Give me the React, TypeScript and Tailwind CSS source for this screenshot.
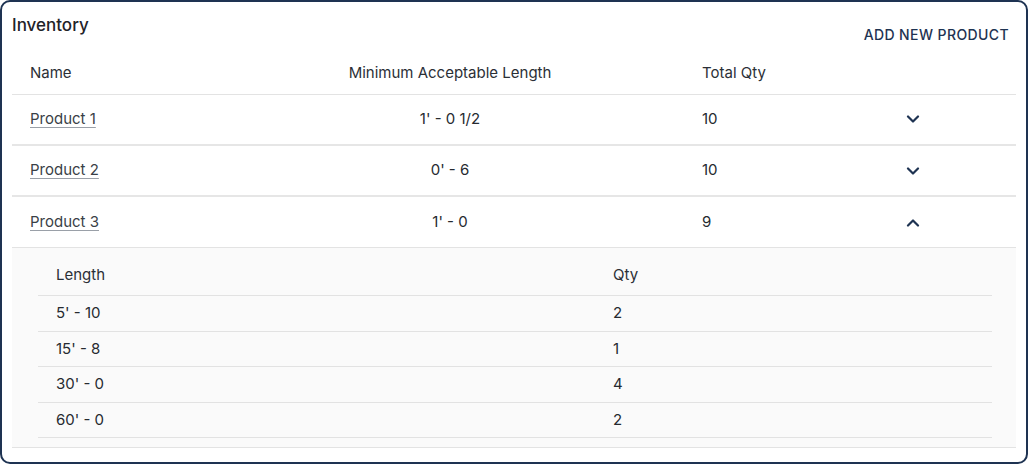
import { useState } from "react";

const products = [
  { id: 1, name: "Product 1", minLength: "1' - 0 1/2", qty: 10, lengths: [] as { length: string; qty: number }[] },
  { id: 2, name: "Product 2", minLength: "0' - 6", qty: 10, lengths: [] },
  {
    id: 3,
    name: "Product 3",
    minLength: "1' - 0",
    qty: 9,
    lengths: [
      { length: "5' - 10", qty: 2 },
      { length: "15' - 8", qty: 1 },
      { length: "30' - 0", qty: 4 },
      { length: "60' - 0", qty: 2 },
    ],
  },
];

function Chevron({ up }: { up: boolean }) {
  return (
    <svg width="14" height="9" viewBox="0 0 14 9" className="inline-block">
      <path
        d={up ? "M2 7.5 L7 2.5 L12 7.5" : "M2 1.5 L7 6.5 L12 1.5"}
        fill="none"
        stroke="#1e3352"
        strokeWidth="2.2"
        strokeLinecap="round"
        strokeLinejoin="round"
      />
    </svg>
  );
}

export default function App() {
  const [openId, setOpenId] = useState<number | null>(3);

  return (
    <div
      className="w-[1028px] h-[464px] bg-white border-2 border-[#1e3352] rounded-[10px] overflow-hidden text-[15px] text-[#262a30]"
      style={{ fontFamily: "Inter, 'Liberation Sans', sans-serif" }}
    >
      <div className="flex items-start justify-between pl-[10px] pr-[17px]">
        <h2 className="text-[17px] leading-[20px] pt-[13px] font-medium text-[#1f2329]">Inventory</h2>
        <button className="text-[14px] leading-[20px] pt-[23px] font-medium text-[#1e3352] tracking-[0.4px]">
          ADD NEW PRODUCT
        </button>
      </div>

      <div className="ml-[10px] mr-[10px] mt-[8px]">
        <table className="w-[1004px] border-collapse table-fixed">
          <colgroup>
            <col className="w-[204px]" />
            <col className="w-[468px]" />
            <col className="w-[174px]" />
            <col className="w-[158px]" />
          </colgroup>
          <thead>
            <tr className="h-[41px] border-b border-[#e3e3e3]">
              <th className="text-left font-normal pl-[18px] text-[#2b2f36]">Name</th>
              <th className="text-center font-normal text-[#2b2f36]">Minimum Acceptable Length</th>
              <th className="text-left font-normal pl-[18px] text-[#2b2f36]">Total Qty</th>
              <th></th>
            </tr>
          </thead>
          <tbody>
            {products.map((p) => {
              const open = openId === p.id;
              return [
                <tr
                  key={p.id}
                  className={`h-[51px] ${open ? "border-b border-[#e3e3e3]" : "border-b-2 border-[#e6e6e6]"}`}
                >
                  <td className="pl-[18px]">
                    <a href="#" className="underline decoration-[#9aa0a8] underline-offset-[3px] text-[#3a3f47]">
                      {p.name}
                    </a>
                  </td>
                  <td className="text-center">{p.minLength}</td>
                  <td className="pl-[18px]">{p.qty}</td>
                  <td className="pl-[48px]">
                    <button onClick={() => setOpenId(open ? null : p.id)} className="p-0 leading-none">
                      <Chevron up={open} />
                    </button>
                  </td>
                </tr>,
                open && (
                  <tr key={`${p.id}-detail`} className="border-b border-[#e3e3e3]">
                    <td colSpan={4} className="bg-[#fafafa] pl-[26px] pr-[24px] pt-[8px] pb-[9px]">
                      <table className="w-[954px] border-collapse table-fixed">
                        <colgroup>
                          <col className="w-[557px]" />
                          <col />
                        </colgroup>
                        <thead>
                          <tr className="h-[40px] border-b border-[#e2e2e2]">
                            <th className="text-left font-normal pl-[18px] text-[#2b2f36]">Length</th>
                            <th className="text-left font-normal pl-[18px] text-[#2b2f36]">Qty</th>
                          </tr>
                        </thead>
                        <tbody>
                          {p.lengths.map((l) => (
                            <tr key={l.length} className="h-[35.5px] border-b border-[#e2e2e2]">
                              <td className="pl-[18px]">{l.length}</td>
                              <td className="pl-[18px]">{l.qty}</td>
                            </tr>
                          ))}
                        </tbody>
                      </table>
                    </td>
                  </tr>
                ),
              ];
            })}
          </tbody>
        </table>
      </div>
    </div>
  );
}
